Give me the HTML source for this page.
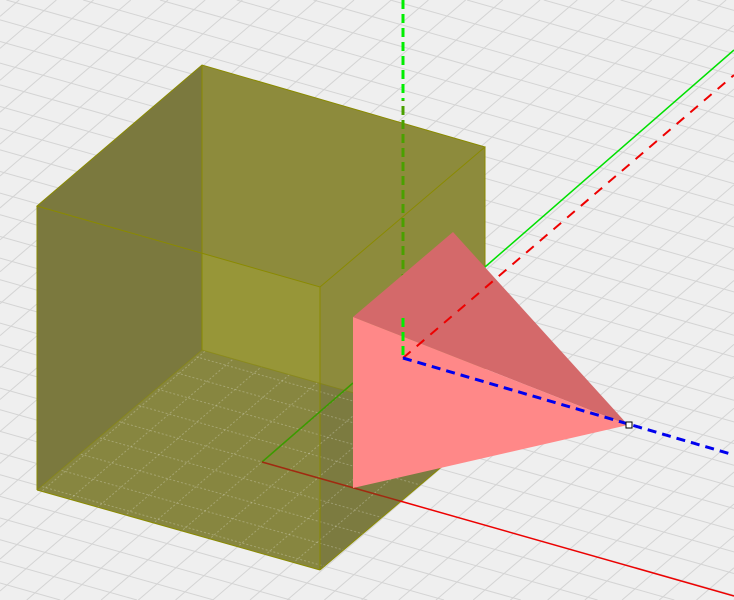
<!DOCTYPE html>
<html><head><style>html,body{margin:0;padding:0;background:#efefef;overflow:hidden;width:734px;height:600px}svg{display:block;overflow:hidden}</style></head>
<body>
<svg id="s" width="734" height="600" viewBox="0 0 734 600" xmlns="http://www.w3.org/2000/svg">
<defs>
<clipPath id="floor"><polygon points="37,490 202,350 485,430 320,570"/></clipPath>
</defs>
<rect width="734" height="600" fill="#efefef"/>
<g id="grid" stroke="#d4d4d4" stroke-width="1"></g>
<polygon points="37,206 202,65 485,147 485,430 320,570 37,490" fill="#8d8b3c"/>
<polygon points="37,206 202,65 202,350 37,490" fill="#7b793e"/>
<polygon points="202,253 320,287 320,383 202,350" fill="#979638"/>
<polygon points="37,490 202,350 320,383 320,570" fill="#878640"/>
<polygon points="320,383 485,430 320,570" fill="#7c7b40"/>
<g id="fgrid" clip-path="url(#floor)" stroke="rgba(255,255,255,0.25)" stroke-width="1" stroke-dasharray="2,2"></g>
<g stroke="#8a8a00" stroke-width="1" fill="none">
<polygon points="37,206 202,65 485,147 320,287"/>
<line x1="37" y1="206" x2="37" y2="490"/>
<line x1="320" y1="287" x2="320" y2="570"/>
<line x1="485" y1="147" x2="485" y2="430"/>
<line x1="202" y1="65" x2="202" y2="350"/>
<line x1="37" y1="490" x2="320" y2="570"/>
<line x1="202" y1="350" x2="485" y2="430" stroke-opacity="0.5"/>
<line x1="37" y1="490" x2="202" y2="350" stroke-opacity="0.5"/>
<line x1="320" y1="570" x2="485" y2="430"/>
</g>
<line x1="262" y1="462" x2="353" y2="383" stroke="#3c9a00" stroke-width="1.5"/>
<line x1="262" y1="462" x2="400" y2="501" stroke="#a02a10" stroke-width="1.5"/>
<line x1="400" y1="501" x2="734" y2="596" stroke="#ee0000" stroke-width="1.5"/>
<line x1="485" y1="267" x2="734" y2="50" stroke="#00e000" stroke-width="1.5"/>
<line x1="403" y1="0" x2="403" y2="100" stroke="#00ee00" stroke-width="3" stroke-dasharray="9,5"/>
<line x1="403" y1="100" x2="403" y2="330" stroke="#4aa000" stroke-width="3" stroke-dasharray="9,5" stroke-dashoffset="8"/>
<polygon points="353,317 453,232 628,425" fill="#d4696a"/>
<polygon points="353,317 628,425 353,488" fill="#ff8888"/>
<line x1="403" y1="318" x2="403" y2="358" stroke="#00ee00" stroke-width="3" stroke-dasharray="9,5"/>
<line x1="403" y1="358" x2="734" y2="75" stroke="#ee0000" stroke-width="2" stroke-dasharray="10,8"/>
<line x1="403" y1="358" x2="734" y2="455" stroke="#0000ee" stroke-width="3" stroke-dasharray="9,6"/>
<rect x="626" y="422" width="6" height="6" fill="#fff" stroke="#000" stroke-width="1"/>
</svg>
<script>
(function(){
var NS="http://www.w3.org/2000/svg";
var ox=262,oy=462,r=[28,7.9],g=[19,-16.3];
var W=734,H=600;
function clip(x1,y1,x2,y2){
 var dx=x2-x1,dy=y2-y1,t0=0,t1=1;
 var p=[-dx,dx,-dy,dy],q=[x1,W-x1,y1,H-y1];
 for(var i=0;i<4;i++){
  if(p[i]===0){if(q[i]<0)return null;}
  else{var t=q[i]/p[i];if(p[i]<0){if(t>t1)return null;if(t>t0)t0=t;}else{if(t<t0)return null;if(t<t1)t1=t;}}
 }
 return [x1+t0*dx,y1+t0*dy,x1+t1*dx,y1+t1*dy];
}
function add(el,x1,y1,x2,y2){var c=clip(x1,y1,x2,y2);if(!c)return;var l=document.createElementNS(NS,"line");l.setAttribute("x1",c[0]);l.setAttribute("y1",c[1]);l.setAttribute("x2",c[2]);l.setAttribute("y2",c[3]);el.appendChild(l);}
var G=document.getElementById("grid"),F=document.getElementById("fgrid");
for(var k=-60;k<=60;k++){
 var px=ox+k*g[0],py=oy+k*g[1];
 [G,F].forEach(function(e){add(e,px-r[0]*80,py-r[1]*80,px+r[0]*80,py+r[1]*80);});
 var qx=ox+k*r[0],qy=oy+k*r[1];
 [G,F].forEach(function(e){add(e,qx-g[0]*80,qy-g[1]*80,qx+g[0]*80,qy+g[1]*80);});
}
})();
</script>
</body></html>
